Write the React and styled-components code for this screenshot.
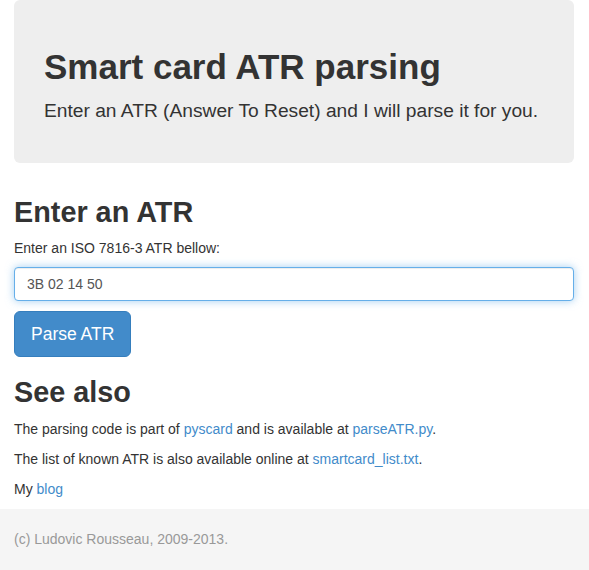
import styled, { createGlobalStyle } from "styled-components";

const GlobalStyle = createGlobalStyle`
    html, body {
        margin: 0;
        padding: 0;
        background: #fff;
    }
    body {
        font-family: "Liberation Sans", Arial, sans-serif;
        font-size: 14px;
        line-height: 20px;
        color: #333;
    }
`;

const Container = styled.div`
    padding: 0 15px 0 14px;
`;

const Jumbotron = styled.div`
    background: #eee;
    border-radius: 6px;
    padding: 50px 30px 39px;
`;

const Title = styled.h1`
    margin: 0;
    font-size: 35px;
    line-height: 34px;
    font-weight: bold;
`;

const Lead = styled.p`
    margin: 13px 0 0;
    font-size: 19.2px;
    line-height: 27px;
    font-weight: 300;
`;

const Heading = styled.h2`
    margin: ${(p) => p.$top}px 0 0;
    font-size: 28.8px;
    line-height: 31px;
    font-weight: bold;
`;

const Label = styled.label`
    display: block;
    margin: 10px 0 0;
`;

const Input = styled.input`
    display: block;
    box-sizing: border-box;
    width: 100%;
    height: 34px;
    margin-top: 9px;
    padding: 6px 12px;
    font-family: inherit;
    font-size: 14px;
    color: #555;
    background: #fff;
    border: 1px solid #66afe9;
    border-radius: 4px;
    outline: 0;
    box-shadow: inset 0 1px 1px rgba(0, 0, 0, 0.075), 0 0 8px rgba(102, 175, 233, 0.6);
`;

const Button = styled.button`
    display: block;
    margin-top: 10px;
    padding: 10px 16px;
    font-family: inherit;
    font-size: 17.5px;
    line-height: 24px;
    color: #fff;
    background-color: #428bca;
    border: 1px solid #357ebd;
    border-radius: 6px;
    cursor: pointer;
`;

const Text = styled.p`
    margin: ${(p) => p.$top || 0}px 0 10px;
`;

const Link = styled.a`
    color: #428bca;
    text-decoration: none;
`;

const Footer = styled.footer`
    background: #f5f5f5;
    padding: 20px 14px 22px;
    color: #999;
`;

export default function App() {
    return (
        <>
            <GlobalStyle />
            <Container>
                <Jumbotron>
                    <Title>Smart card ATR parsing</Title>
                    <Lead>Enter an ATR (Answer To Reset) and I will parse it for you.</Lead>
                </Jumbotron>

                <Heading $top={34}>Enter an ATR</Heading>
                <form onSubmit={(e) => e.preventDefault()}>
                    <Label htmlFor="atr">Enter an ISO 7816-3 ATR bellow:</Label>
                    <Input id="atr" type="text" defaultValue="3B 02 14 50" />
                    <Button type="submit">Parse ATR</Button>
                </form>

                <Heading $top={20}>See also</Heading>
                <Text $top={11}>
                    The parsing code is part of <Link href="#">pyscard</Link> and is available at{" "}
                    <Link href="#">parseATR.py</Link>.
                </Text>
                <Text>
                    The list of known ATR is also available online at{" "}
                    <Link href="#">smartcard_list.txt</Link>.
                </Text>
                <Text>
                    My <Link href="#">blog</Link>
                </Text>
            </Container>
            <Footer>(c) Ludovic Rousseau, 2009-2013.</Footer>
        </>
    );
}
